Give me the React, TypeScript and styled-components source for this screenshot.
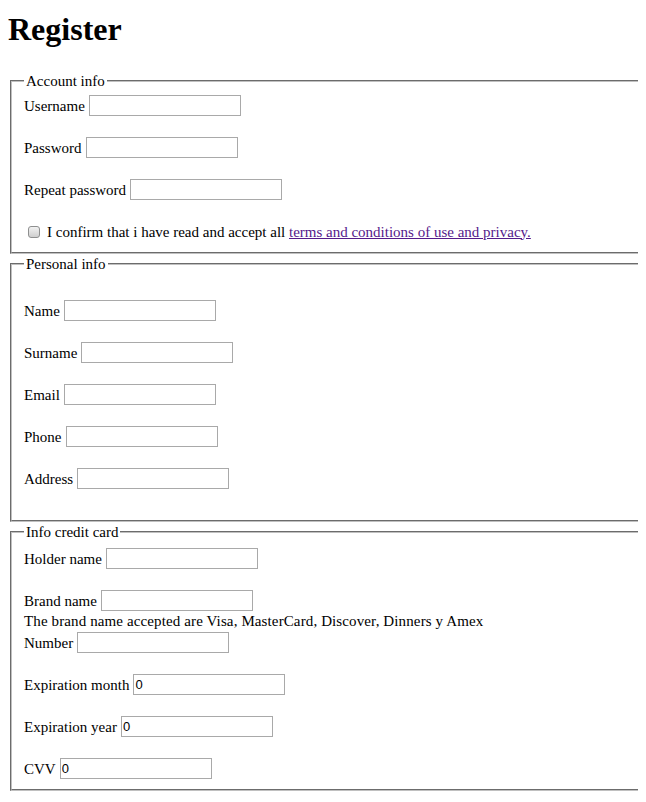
import React from 'react';
import styled, { createGlobalStyle } from 'styled-components';

const GlobalStyle = createGlobalStyle`
  body {
    margin: 8px;
    background: #fff;
    color: #000;
    font-family: 'Liberation Serif', 'Times New Roman', serif;
    font-size: 15px;
  }
`;

const Title = styled.h1`
  margin: 3px 0 24px;
  font-size: 32px;
  line-height: 37px;
  font-weight: bold;
`;

const Form = styled.form`
  display: block;
`;

const Fieldset = styled.fieldset<{ $top: number; $bottom: number }>`
  display: block;
  margin: 0 -8px 0 2px;
  padding: ${(p) => p.$top}px 12px ${(p) => p.$bottom}px;
  border: 2px groove #c0c0c0;
  border-right: none;
  min-width: 0;

  & + & {
    margin-top: 1px;
  }
`;

const Legend = styled.legend`
  padding: 0 2px;
  font-size: 15px;
  line-height: 18px;
`;

const Row = styled.div<{ $flush?: boolean }>`
  display: flex;
  align-items: center;
  gap: 4px;
  height: 21px;
  margin-top: ${(p) => (p.$flush ? 0 : 21)}px;

  &:first-of-type {
    margin-top: 0;
  }
`;

const Label = styled.label`
  white-space: nowrap;
  padding-top: 1px;
`;

const Input = styled.input`
  box-sizing: border-box;
  width: 152px;
  height: 21px;
  margin: 0;
  padding: 0 1px;
  border: 1px solid #a9a9a9;
  border-radius: 0;
  background: #fff;
  font-family: 'Liberation Sans', Arial, sans-serif;
  font-size: 13px;
  color: #000;
  outline: none;
`;

const Check = styled.input`
  appearance: none;
  box-sizing: border-box;
  width: 12px;
  height: 12px;
  margin: 0 3px 0 4px;
  border: 1px solid #8e8f8f;
  border-radius: 3px;
  background: linear-gradient(#f2f2f2, #cfcfcf);
`;

const Note = styled.div`
  height: 21px;
  line-height: 21px;
  white-space: nowrap;
  letter-spacing: 0.12px;
`;

const Consent = styled.span`
  white-space: nowrap;
  padding-top: 1px;
`;

const Link = styled.a`
  color: #551a8b;
  text-decoration: underline;
`;

type Field = { label: string; value?: string; flush?: boolean };

const account: Field[] = [
  { label: 'Username' },
  { label: 'Password' },
  { label: 'Repeat password' },
];

const personal: Field[] = [
  { label: 'Name' },
  { label: 'Surname' },
  { label: 'Email' },
  { label: 'Phone' },
  { label: 'Address' },
];

const FieldRow: React.FC<Field> = ({ label, value, flush }) => (
  <Row $flush={flush}>
    <Label>{label}</Label>
    <Input type="text" defaultValue={value} />
  </Row>
);

const App: React.FC = () => {
  return (
    <>
      <GlobalStyle />
      <Title>Register</Title>
      <Form onSubmit={(e) => e.preventDefault()}>
        <Fieldset $top={5} $bottom={10}>
          <Legend>Account info</Legend>
          {account.map((f) => (
            <FieldRow key={f.label} {...f} />
          ))}
          <Row>
            <Check type="checkbox" />
            <Consent>
              I confirm that i have read and accept all{' '}
              <Link href="#">terms and conditions of use and privacy.</Link>
            </Consent>
          </Row>
        </Fieldset>

        <Fieldset $top={27} $bottom={31}>
          <Legend>Personal info</Legend>
          {personal.map((f) => (
            <FieldRow key={f.label} {...f} />
          ))}
        </Fieldset>

        <Fieldset $top={7} $bottom={10}>
          <Legend>Info credit card</Legend>
          <FieldRow label="Holder name" />
          <FieldRow label="Brand name" />
          <Note>The brand name accepted are Visa, MasterCard, Discover, Dinners y Amex</Note>
          <FieldRow label="Number" flush />
          <FieldRow label="Expiration month" value="0" />
          <FieldRow label="Expiration year" value="0" />
          <FieldRow label="CVV" value="0" />
        </Fieldset>
      </Form>
    </>
  );
};

export default App;
